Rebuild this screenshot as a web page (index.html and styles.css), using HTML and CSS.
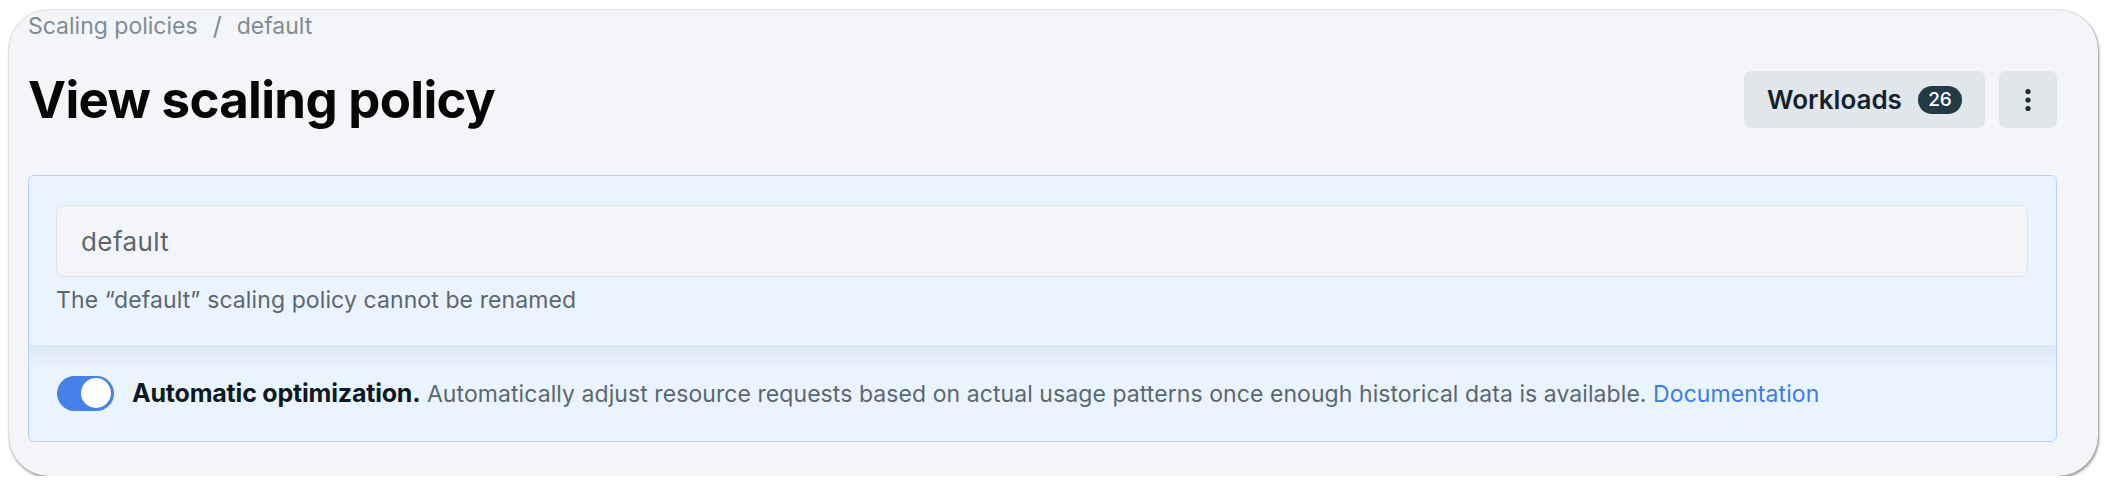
FILE: index.html
```html
<!DOCTYPE html>
<html lang="en">
<head>
<meta charset="utf-8">
<title>View scaling policy</title>
<link rel="stylesheet" href="styles.css">
</head>
<body>
<div class="frame">
  <nav class="crumbs">
    <span class="crumb">Scaling policies</span>
    <span class="sep">/</span>
    <span class="crumb">default</span>
  </nav>
  <header class="head">
    <h1 class="title">View scaling policy</h1>
    <div class="actions">
      <button class="btn btn-workloads"><span class="btn-label">Workloads</span><span class="badge">26</span></button>
      <button class="btn btn-more" aria-label="More">
        <svg width="6" height="24" viewBox="0 0 6 24"><circle cx="3" cy="3.5" r="2.6" fill="#1d2d38"/><circle cx="3" cy="12" r="2.6" fill="#1d2d38"/><circle cx="3" cy="20.5" r="2.6" fill="#1d2d38"/></svg>
      </button>
    </div>
  </header>
  <section class="panel">
    <div class="panel-top">
      <div class="input">default</div>
      <p class="hint">The “default” scaling policy cannot be renamed</p>
    </div>
    <div class="panel-bottom">
      <span class="toggle"><span class="knob"></span></span>
      <p class="opt"><strong class="opt-title">Automatic optimization.</strong> Automatically adjust resource requests based on actual usage patterns once enough historical data is available. <a class="link" href="#">Documentation</a></p>
    </div>
  </section>
</div>
</body>
</html>
```

FILE: styles.css
```css
* { box-sizing: border-box; }
html, body { margin: 0; padding: 0; background: #ffffff; }
body { font-family: "Inter", "Liberation Sans", sans-serif; }

.frame {
  margin: 10px 10px 0 9px;
  width: 2089px;
  height: 466px;
  padding: 0 41px 0 19px;
  border-radius: 40px;
  background: #f4f5f9;
  box-shadow: 1px 2px 3px rgba(0,0,0,0.38), 0 0 2px rgba(0,0,0,0.3);
}

.crumbs {
  display: flex;
  align-items: center;
  height: 32px;
  font-size: 23px;
  color: #7f8c95;
  gap: 15px;
}
.sep { font-size: 25px; color: #7f8c95; }

.head {
  margin-top: 29px;
  height: 57px;
  display: flex;
  align-items: center;
  justify-content: space-between;
}
.title {
  margin: 0;
  font-size: 51px;
  font-weight: 700;
  color: #060606;
  letter-spacing: -0.7px;
  line-height: 57px;
}
.actions { display: flex; gap: 14px; }
.btn {
  border: 0;
  height: 57px;
  border-radius: 7px;
  background: #e1e6ea;
  font-family: inherit;
  display: flex;
  align-items: center;
  justify-content: center;
  padding: 0;
}
.btn-workloads { width: 241px; padding: 0 23px; justify-content: space-between; }
.btn-label { font-size: 26px; font-weight: 600; color: #13232e; }
.badge {
  width: 44px;
  height: 28px;
  border-radius: 14px;
  background: #233a47;
  color: #ffffff;
  font-size: 19px;
  font-weight: 500;
  display: flex;
  align-items: center;
  justify-content: center;
}
.btn-more { width: 58px; }

.panel {
  margin-top: 47px;
  height: 267px;
  border: 1px solid #b3d2fb;
  border-radius: 6px;
  background: #eaf4fe;
  display: flex;
  flex-direction: column;
}
.panel-top { padding: 29px 28px 0 27px; height: 169px; }
.input {
  height: 72px;
  border: 1px solid #dfe4ea;
  border-radius: 8px;
  background: #f4f5f9;
  padding-left: 24px;
  display: flex;
  align-items: center;
  font-size: 26px;
  letter-spacing: 0.4px;
  color: #5b6770;
}
.hint {
  margin: 8px 0 0 0;
  font-size: 23px;
  letter-spacing: 0.1px;
  line-height: 30px;
  color: #5b6770;
}
.panel-bottom {
  flex: 1;
  display: flex;
  align-items: center;
  gap: 18px;
  padding-left: 28px;
  background: linear-gradient(#dce8f6, #eaf4fe 26px);
  border-radius: 0 0 6px 6px;
}
.toggle {
  position: relative;
  flex: none;
  width: 57px;
  height: 35px;
  border-radius: 18px;
  background: #4680e8;
}
.knob {
  position: absolute;
  right: 3px;
  top: 2.5px;
  width: 30px;
  height: 30px;
  border-radius: 50%;
  background: #ffffff;
}
.opt {
  margin: 0;
  font-size: 23px;
  letter-spacing: 0.07px;
  color: #5b6770;
  white-space: nowrap;
}
.opt-title { font-size: 25px; font-weight: 700; color: #0e1a22; letter-spacing: -0.2px; }
.link { color: #3b7de6; text-decoration: none; }
```
